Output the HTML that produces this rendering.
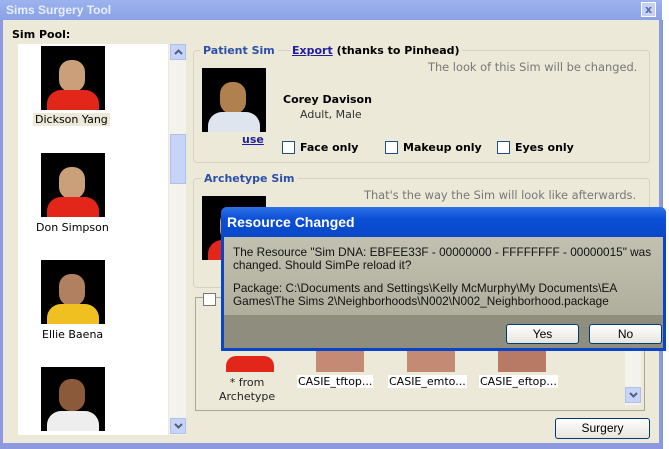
<!DOCTYPE html>
<html><head><style>
*{margin:0;padding:0;box-sizing:border-box}
body{width:669px;height:449px;overflow:hidden;background:#fff;position:relative;font-family:"DejaVu Sans",Verdana,sans-serif;font-size:11px;color:#000}
.a{position:absolute}
.win{left:0;top:0;width:662px;height:449px;background:#ece9d8;border-left:3px solid #8d9ae0;border-right:3px solid #8d9ae0;border-bottom:6px solid #8d9ae0}
.tb{left:0;top:0;width:662px;height:20px;background:linear-gradient(#9db3ee,#8aa2e4);color:#e8eefc;font-family:"Liberation Sans",sans-serif;font-weight:bold;font-size:12px;padding:3px 6px}
.pic{background:#000;width:64px;height:64px;overflow:hidden}
.pic i{position:absolute;left:18px;top:14px;width:26px;height:32px;border-radius:12px;background:#c9a07a}
.pic b{position:absolute;left:6px;top:44px;width:52px;height:22px;border-radius:14px 14px 0 0;background:#e2261a}
.grp{border:1px solid #d6d2c2;border-radius:4px}
.gt{color:#2d4fa8;font-weight:bold;background:#ece9d8;padding:0 3px}
.cb{width:13px;height:13px;border:1px solid #1c5180;background:#fff}
.sb{width:16px;height:16px;background:#c6d4f7;border:1px solid #b0c0ea}
.sb svg{position:absolute;left:3px;top:4px}
.btn{border:1px solid #003c74;border-radius:3px;background:linear-gradient(#fff,#e6e4dc);text-align:center;font-family:'Liberation Sans',sans-serif;font-size:12px}
</style></head><body>
<div class="a win"></div>
<div class="a tb">Sims Surgery Tool</div>
<div class="a" style="left:641px;top:2px;width:15px;height:15px;background:#c6d0f0;border:1px solid #fff;color:#5a6ab0;font-size:11px;text-align:center;line-height:13px;font-weight:bold">x</div>
<div class="a" style="left:662px;top:20px;width:7px;height:429px;background:#fff;border-left:1px solid #7f9db9"></div>
<div class="a" style="left:12px;top:28px;font-weight:bold">Sim Pool:</div>
<div class="a" style="left:18px;top:44px;width:150px;height:391px;background:#fff"></div>
<div class="a" style="left:169px;top:44px;width:17px;height:391px;background:#f3f2ec"></div>
<div class="a sb" style="left:170px;top:44px"><svg width="9" height="6"><path d="M1 5L4.5 1.5L8 5" stroke="#4d6185" stroke-width="2" fill="none"/></svg></div>
<div class="a" style="left:170px;top:134px;width:16px;height:50px;background:#c6d4f7;border:1px solid #b0c0ea"></div>
<div class="a sb" style="left:170px;top:418px"><svg width="9" height="6"><path d="M1 1L4.5 4.5L8 1" stroke="#4d6185" stroke-width="2" fill="none"/></svg></div>
<div class="a pic" style="left:41px;top:46px"><i></i><b></b></div>
<div class="a" style="left:33px;top:113px;background:#ece9d8;padding:0 2px">Dickson Yang</div>
<div class="a pic" style="left:41px;top:153px"><i></i><b></b></div>
<div class="a" style="left:36px;top:221px">Don Simpson</div>
<div class="a pic" style="left:41px;top:260px"><i style="background:#b08060"></i><b style="background:#f0c020"></b></div>
<div class="a" style="left:42px;top:328px">Ellie Baena</div>
<div class="a pic" style="left:41px;top:367px"><i style="background:#8a5a3a;top:12px"></i><b style="background:#eee"></b></div>

<div class="a grp" style="left:193px;top:50px;width:457px;height:113px"></div>
<div class="a" style="left:200px;top:44px"><span class="gt">Patient Sim</span></div>
<div class="a" style="left:290px;top:44px;background:#ece9d8;padding:0 2px;font-weight:bold"><span style="color:#1f1fa0;text-decoration:underline">Export</span> (thanks to Pinhead)</div>
<div class="a" style="left:428px;top:60px;color:#777;font-size:11.4px">The look of this Sim will be changed.</div>
<div class="a pic" style="left:202px;top:68px"><i style="background:#b0804f"></i><b style="background:#dfe5ee"></b></div>
<div class="a" style="left:242px;top:133px;color:#1f1fa0;font-weight:bold;text-decoration:underline">use</div>
<div class="a" style="left:283px;top:93px;font-weight:bold">Corey Davison</div>
<div class="a" style="left:300px;top:108px;color:#333">Adult, Male</div>
<div class="a cb" style="left:282px;top:141px"></div><div class="a" style="left:300px;top:141px;font-weight:bold">Face only</div>
<div class="a cb" style="left:385px;top:141px"></div><div class="a" style="left:403px;top:141px;font-weight:bold">Makeup only</div>
<div class="a cb" style="left:497px;top:141px"></div><div class="a" style="left:515px;top:141px;font-weight:bold">Eyes only</div>

<div class="a grp" style="left:193px;top:178px;width:457px;height:110px"></div>
<div class="a" style="left:201px;top:172px"><span class="gt">Archetype Sim</span></div>
<div class="a" style="left:364px;top:188px;color:#777;font-size:11.4px">That's the way the Sim will look like afterwards.</div>
<div class="a pic" style="left:202px;top:196px"><i></i><b></b></div>

<div class="a" style="left:195px;top:297px;width:450px;height:114px;border:1px solid #a8a69a"></div>
<div class="a cb" style="left:203px;top:293px;border-color:#777"></div>
<div class="a" style="left:226px;top:356px;width:48px;height:16px;background:#e2261a;border-radius:10px 10px 0 0"></div>
<div class="a" style="left:316px;top:350px;width:48px;height:22px;background:#c48a74"></div>
<div class="a" style="left:407px;top:350px;width:48px;height:22px;background:#c48a74"></div>
<div class="a" style="left:498px;top:350px;width:48px;height:22px;background:#b87a64"></div>
<div class="a" style="left:219px;top:376px;text-align:center;color:#222;line-height:14px">* from<br>Archetype</div>
<div class="a" style="left:297px;top:375px;background:#fff;padding:0 1px">CASIE_tftop...</div>
<div class="a" style="left:388px;top:375px;background:#fff;padding:0 1px">CASIE_emto...</div>
<div class="a" style="left:479px;top:375px;background:#fff;padding:0 1px">CASIE_eftop...</div>
<div class="a" style="left:625px;top:350px;width:16px;height:55px;background:#f3f2ec"></div>
<div class="a sb" style="left:625px;top:387px"><svg width="9" height="6"><path d="M1 1L4.5 4.5L8 1" stroke="#4d6185" stroke-width="2" fill="none"/></svg></div>
<div class="a btn" style="left:555px;top:418px;width:95px;height:21px;line-height:19px">Surgery</div>

<div class="a" style="left:221px;top:207px;width:445px;height:144px;border:3px solid #0a44c8;border-top:none;border-radius:6px 6px 0 0;background:linear-gradient(#c9c8b8,#a8a796)"></div>
<div class="a" style="left:221px;top:207px;width:445px;height:30px;background:linear-gradient(#2e72e8,#0b4fd6 40%,#0a48c8);border-radius:6px 6px 0 0;color:#fff;font-family:'Liberation Sans',sans-serif;font-size:14px;font-weight:bold;padding:7px 6px">Resource Changed</div>
<div class="a" style="left:224px;top:315px;width:439px;height:33px;background:#8f8d7d"></div>
<div class="a" style="left:233px;top:246px;font-family:'Liberation Sans',sans-serif;font-size:11.8px;line-height:13px;color:#111;width:430px">The Resource "Sim DNA: EBFEE33F - 00000000 - FFFFFFFF - 00000015" was changed. Should SimPe reload it?</div>
<div class="a" style="left:233px;top:282px;font-family:'Liberation Sans',sans-serif;font-size:11.8px;line-height:13px;color:#111;width:430px">Package: C:\Documents and Settings\Kelly McMurphy\My Documents\EA Games\The Sims 2\Neighborhoods\N002\N002_Neighborhood.package</div>
<div class="a btn" style="left:506px;top:324px;width:73px;height:20px;line-height:18px">Yes</div>
<div class="a btn" style="left:589px;top:324px;width:73px;height:20px;line-height:18px">No</div>
</body></html>
